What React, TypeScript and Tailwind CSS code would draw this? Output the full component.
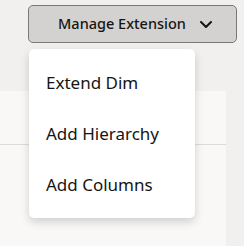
const items = ["Extend Dim", "Add Hierarchy", "Add Columns"]

export default function App() {
  return (
    <div
      className="relative h-[246px] w-[244px] overflow-hidden bg-[#f1f0ef] text-[#161513]"
      style={{ fontFamily: '"Noto Sans", "Open Sans", sans-serif' }}
    >
      {/* header with the action button */}
      <div className="flex h-[91px] justify-end pr-[7px] pt-[5px]">
        <button className="flex h-[38px] w-[209px] items-center justify-center gap-[14px] rounded-[5px] border border-[#7a7978] bg-[#d3d2d1] pl-[5px] text-[14.5px] font-medium">
          Manage Extension
          <svg width="12" height="7" viewBox="0 0 12 7" fill="none">
            <path d="M1 1l5 5 5-5" stroke="#161513" strokeWidth="2" strokeLinecap="round" strokeLinejoin="round" />
          </svg>
        </button>
      </div>

      {/* content panel behind the menu */}
      <div className="w-[226px] bg-[#f9f8f6]">
        <div className="h-[54px] border-b border-[#dcdbd9]" />
        <div className="h-[120px]" />
      </div>

      {/* dropdown menu */}
      <div className="absolute left-[29px] top-[49px] w-[166px] rounded-[5px] bg-white py-2 shadow-[0_4px_10px_rgba(0,0,0,0.16)]">
        {items.map((item) => (
          <div key={item} className="flex h-[51px] items-center pl-[17px] text-[17px]">
            {item}
          </div>
        ))}
      </div>
    </div>
  )
}
